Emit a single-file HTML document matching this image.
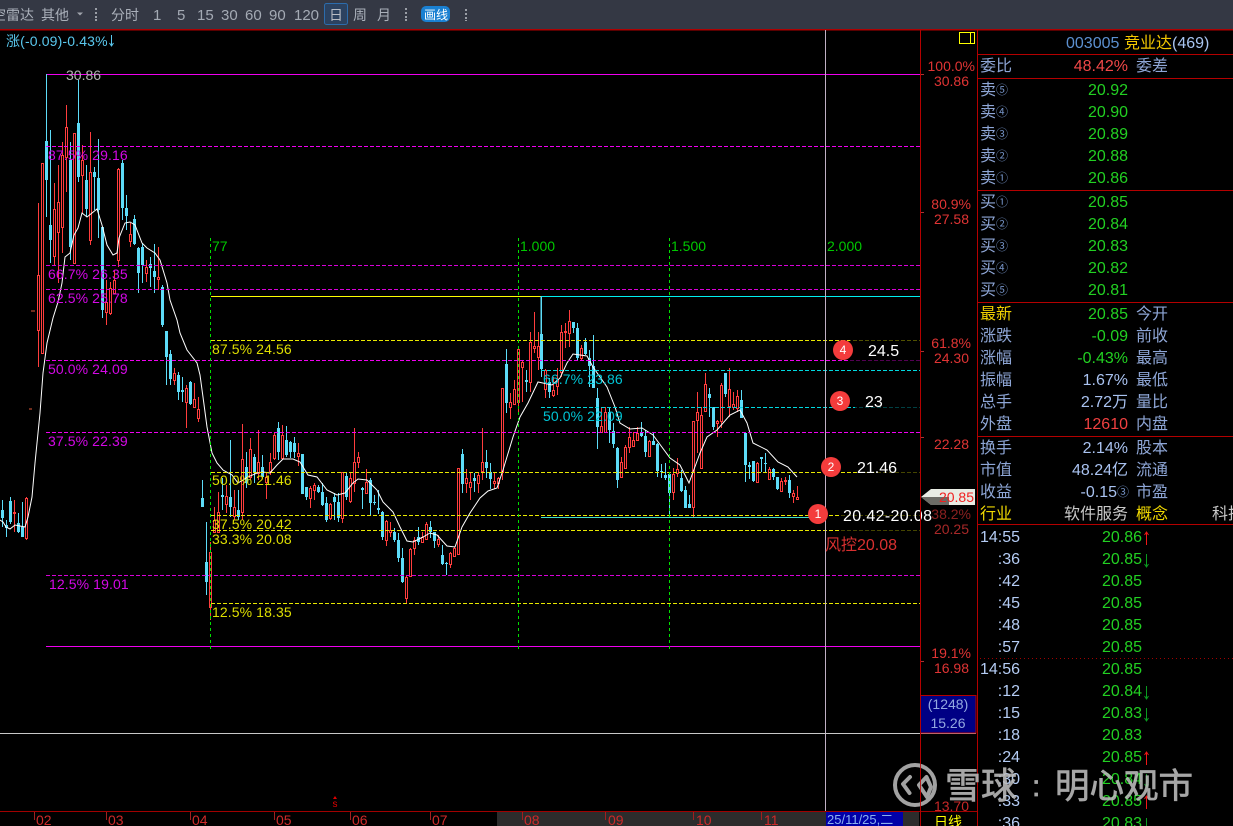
<!DOCTYPE html>
<html lang="zh"><head><meta charset="utf-8"><title>K线</title>
<style>
html,body{margin:0;padding:0;background:#000;width:1233px;height:826px;overflow:hidden}
svg{display:block;position:absolute;left:0;top:0}
text{font-family:"Liberation Sans","Noto Sans CJK SC",sans-serif;white-space:pre}
.tb{font-size:14px;fill:#aab0ba}
.tn{font-size:15px;fill:#a4aab4}
.ma{font-size:14px;fill:#d408e6;letter-spacing:.1px}
.ye{font-size:14px;fill:#dede00;letter-spacing:.1px}
.cy{font-size:14px;fill:#00c4d4;letter-spacing:.1px}
.gr{font-size:14px;fill:#00c800}
.ax{font-size:14px;fill:#e03434}
.mo{font-size:14px;fill:#cc2a2a}
.lb{font-size:16px;fill:#8ea6d6}
.v{font-size:16px;fill:#22d022;text-anchor:end}
.w{font-size:16px;fill:#a9c2f0;text-anchor:end}
.c{font-size:12px;fill:#7391c4;font-family:"Noto Sans CJK SC",sans-serif}
.t{font-size:16px;fill:#b4ccf4;text-anchor:end}
.wl{font-size:16px;fill:#fff}
.cn{font-size:12px;fill:#fff;text-anchor:middle}
</style></head><body>
<svg width="1233" height="826" viewBox="0 0 1233 826" xmlns="http://www.w3.org/2000/svg">
<rect width="1233" height="826" fill="#000"/>
<!-- toolbar -->
<rect width="1233" height="29" fill="#343844"/>
<rect y="29" width="1233" height="1.5" fill="#b00000"/>
<text x="-8" y="20" class="tb">空雷达</text><text x="41" y="20" class="tb">其他</text>
<path d="M77 12.500h6l-3 3z" fill="#a0a4ac"/>
<path d="M96 8v2M96 12v2M96 16v2M96 19v2M466 9v2M466 13v2M466 17v2M466 20v1" stroke="#9a9ea6" stroke-width="2"/>
<path d="M406 8v2M406 12v2M406 16v2M406 19v2" stroke="#9a9ea6" stroke-width="2"/>
<text x="111" y="20" class="tb">分时</text>
<text x="153" y="20" class="tn">1</text><text x="177" y="20" class="tn">5</text>
<text x="197" y="20" class="tn">15</text><text x="221" y="20" class="tn">30</text><text x="245" y="20" class="tn">60</text><text x="269" y="20" class="tn">90</text><text x="294" y="20" class="tn">120</text>
<rect x="324.500" y="3.500" width="23" height="21" rx="2" fill="#2c4260" stroke="#2c6cac"/>
<text x="329" y="20" class="tb" style="fill:#b8bcc4">日</text>
<text x="353" y="20" class="tb">周</text><text x="377" y="20" class="tb">月</text>
<rect x="421" y="6" width="29" height="16" rx="5" fill="#1a80d2"/>
<text x="424" y="19" style="font-size:12px;fill:#fff">画线</text>

<!-- candles -->
<path stroke="#5ddcf8" fill="none" shape-rendering="crispEdges" d="M2.500 500V527M6.500 520V537M10.500 497V524M18.500 513V533M22.500 502V537M46.500 75V217M50.500 130V263M70.500 142V260M78.500 80V182M86.500 165V217M94.500 167V210M98.500 139V238M102.500 227V318M122.500 160V220M126.500 195V230M134.500 215V245M138.500 247V293M142.500 243V283M150.500 257V287M154.500 244V293M162.500 285V327M166.500 331V385M170.500 350V385M178.500 372V400M182.500 377V402M190.500 381V405M202.500 480V507M206.500 522V595M222.500 478V510M230.500 440V517M238.500 490V520M246.500 452V488M254.500 454V483M262.500 455V478M278.500 422V460M286.500 426V457M290.500 441V458M294.500 437V458M302.500 454V494M306.500 487V500M318.500 485V493M322.500 483V506M326.500 497V522M334.500 493V520M338.500 493V522M346.500 472V500M362.500 487V509M370.500 478V515M374.500 495V505M378.500 490V514M382.500 511V540M394.500 528V542M398.500 533V562M402.500 548V583M418.500 527V545M430.500 521V538M434.500 532V548M442.500 545V565M446.500 562V575M462.500 449V493M474.500 473V492M486.500 450V478M490.500 463V489M506.500 349V413M526.500 370V392M541.500 297V377M549.500 378V398M573.500 322V333M577.500 323V360M585.500 338V355M589.500 350V387M593.500 335V388M597.500 388V449M609.500 408V443M613.500 423V448M617.500 447V488M641.500 422V437M645.500 430V457M653.500 432V445M657.500 443V477M661.500 464V478M665.500 463V480M669.500 473V517M681.500 470V492M685.500 486V508M689.500 495V508M709.500 388V417M713.500 407V430M725.500 373V397M741.500 390V418M745.500 433V482M749.500 462V479M753.500 462V482M761.500 457V472M765.500 453V472M773.500 468V480M777.500 477V490M789.500 475V498"/>
<path fill="#5ddcf8" shape-rendering="crispEdges" d="M1 510h3V518h-3zM5 525h3V528h-3zM9 501h3V522h-3zM17 523h3V532h-3zM21 527h3V537h-3zM45 141h3V180h-3zM49 225h3V240h-3zM69 160h3V247h-3zM77 123h3V177h-3zM85 180h3V209h-3zM93 172h3V177h-3zM97 178h3V210h-3zM101 227h3V310h-3zM121 163h3V208h-3zM125 208h3V216h-3zM133 219h3V244h-3zM137 248h3V273h-3zM141 247h3V265h-3zM149 264h3V268h-3zM153 271h3V277h-3zM161 287h3V325h-3zM165 331h3V357h-3zM169 354h3V379h-3zM177 375h3V392h-3zM181 390h3V392h-3zM189 382h3V404h-3zM201 498h3V507h-3zM205 562h3V582h-3zM221 495h3V497h-3zM229 497h3V507h-3zM237 510h3V517h-3zM245 467h3V483h-3zM253 457h3V473h-3zM261 467h3V477h-3zM277 428h3V452h-3zM285 440h3V455h-3zM289 442h3V452h-3zM293 443h3V452h-3zM301 454h3V494h-3zM305 487h3V497h-3zM317 487h3V492h-3zM321 492h3V505h-3zM325 503h3V520h-3zM333 497h3V502h-3zM337 502h3V518h-3zM345 476h3V497h-3zM361 488h3V490h-3zM369 480h3V503h-3zM373 502h3V503h-3zM377 508h3V510h-3zM381 512h3V537h-3zM393 532h3V540h-3zM397 540h3V558h-3zM401 558h3V582h-3zM417 537h3V542h-3zM429 527h3V532h-3zM433 532h3V541h-3zM441 555h3V564h-3zM445 563h3V564h-3zM461 454h3V484h-3zM473 478h3V481h-3zM485 462h3V468h-3zM489 472h3V479h-3zM505 364h3V403h-3zM525 380h3V382h-3zM540 334h3V369h-3zM548 382h3V392h-3zM572 322h3V328h-3zM576 328h3V358h-3zM584 342h3V354h-3zM588 358h3V366h-3zM592 366h3V388h-3zM596 398h3V427h-3zM608 412h3V430h-3zM612 431h3V444h-3zM616 448h3V480h-3zM640 433h3V436h-3zM644 436h3V452h-3zM652 441h3V445h-3zM656 444h3V471h-3zM660 471h3V472h-3zM664 475h3V478h-3zM668 474h3V493h-3zM680 478h3V491h-3zM684 490h3V508h-3zM688 504h3V508h-3zM708 394h3V398h-3zM712 407h3V427h-3zM724 373h3V394h-3zM740 400h3V418h-3zM744 433h3V465h-3zM748 465h3V467h-3zM752 461h3V481h-3zM760 457h3V459h-3zM764 463h3V464h-3zM772 469h3V477h-3zM776 477h3V489h-3zM788 480h3V493h-3z"/>
<path stroke="#ff3d3d" fill="none" shape-rendering="crispEdges" d="M14.500 500V532M26.500 497V540M38.500 203V367M42.500 163V353M54.500 183V265M58.500 165V283M62.500 142V253M66.500 105V192M74.500 133V263M82.500 145V213M90.500 132V245M106.500 280V325M110.500 282V315M114.500 270V293M118.500 168V267M130.500 223V247M146.500 260V282M158.500 247V290M174.500 368V385M186.500 385V428M194.500 383V408M198.500 397V422M210.500 542V620M214.500 507V533M218.500 492V532M226.500 485V513M234.500 490V520M242.500 424V520M250.500 438V480M258.500 430V480M266.500 472V499M270.500 453V475M274.500 432V460M282.500 425V458M298.500 443V466M310.500 486V508M314.500 483V500M330.500 503V520M342.500 472V523M350.500 473V503M354.500 428V492M358.500 452V468M366.500 469V493M386.500 520V546M390.500 522V537M406.500 575V603M410.500 548V577M414.500 537V555M422.500 532V543M426.500 522V540M438.500 535V547M450.500 552V568M454.500 547V557M458.500 468V555M466.500 469V493M470.500 472V500M478.500 472V493M482.500 428V480M494.500 473V489M498.500 477V489M502.500 388V480M510.500 393V419M514.500 380V404M518.500 349V412M522.500 360V402M530.500 332V392M534.500 312V353M538.500 332V370M545.500 369V398M553.500 377V397M557.500 368V395M561.500 325V377M565.500 323V348M569.500 310V347M581.500 345V360M601.500 407V433M605.500 407V433M621.500 457V477M625.500 445V469M629.500 427V453M633.500 432V447M637.500 427V440M649.500 440V457M673.500 468V500M677.500 458V477M693.500 421V517M697.500 392V453M701.500 407V468M705.500 373V412M717.500 420V437M721.500 383V428M729.500 368V417M733.500 392V410M737.500 390V412M757.500 462V483M769.500 467V480M781.500 478V492M785.500 477V485M793.500 490V503M797.500 486V500"/>
<path fill="#000" stroke="#ff3d3d" shape-rendering="crispEdges" d="M13.500 512.500h2V513.500h-2zM25.500 498.500h2V538.500h-2zM37.500 275.500h2V330.500h-2zM41.500 163.500h2V353.500h-2zM53.500 209.500h2V256.500h-2zM57.500 202.500h2V232.500h-2zM61.500 155.500h2V227.500h-2zM65.500 127.500h2V157.500h-2zM73.500 133.500h2V263.500h-2zM81.500 160.500h2V175.500h-2zM89.500 172.500h2V240.500h-2zM105.500 302.500h2V312.500h-2zM109.500 288.500h2V313.500h-2zM113.500 280.500h2V293.500h-2zM117.500 169.500h2V260.500h-2zM129.500 234.500h2V241.500h-2zM145.500 267.500h2V273.500h-2zM157.500 277.500h2V279.500h-2zM173.500 373.500h2V380.500h-2zM185.500 388.500h2V402.500h-2zM193.500 399.500h2V407.500h-2zM197.500 409.500h2V418.500h-2zM209.500 552.500h2V607.500h-2zM213.500 520.500h2V532.500h-2zM217.500 512.500h2V532.500h-2zM225.500 496.500h2V504.500h-2zM233.500 507.500h2V516.500h-2zM241.500 459.500h2V512.500h-2zM249.500 449.500h2V477.500h-2zM257.500 462.500h2V473.500h-2zM265.500 477.500h2V482.500h-2zM269.500 462.500h2V471.500h-2zM273.500 435.500h2V458.500h-2zM281.500 435.500h2V458.500h-2zM297.500 453.500h2V456.500h-2zM309.500 488.500h2V498.500h-2zM313.500 485.500h2V490.500h-2zM329.500 504.500h2V518.500h-2zM341.500 472.500h2V518.500h-2zM349.500 478.500h2V501.500h-2zM353.500 462.500h2V483.500h-2zM357.500 457.500h2V462.500h-2zM365.500 482.500h2V493.500h-2zM385.500 521.500h2V540.500h-2zM389.500 530.500h2V532.500h-2zM405.500 577.500h2V598.500h-2zM409.500 549.500h2V576.500h-2zM413.500 540.500h2V548.500h-2zM421.500 537.500h2V542.500h-2zM425.500 524.500h2V539.500h-2zM437.500 539.500h2V544.500h-2zM449.500 553.500h2V564.500h-2zM453.500 548.500h2V556.500h-2zM457.500 468.500h2V554.500h-2zM465.500 478.500h2V483.500h-2zM469.500 482.500h2V487.500h-2zM477.500 475.500h2V483.500h-2zM481.500 462.500h2V471.500h-2zM493.500 481.500h2V483.500h-2zM497.500 478.500h2V483.500h-2zM501.500 388.500h2V472.500h-2zM509.500 402.500h2V407.500h-2zM513.500 389.500h2V404.500h-2zM517.500 349.500h2V402.500h-2zM521.500 362.500h2V367.500h-2zM529.500 342.500h2V382.500h-2zM533.500 346.500h2V348.500h-2zM537.500 346.500h2V357.500h-2zM544.500 370.500h2V389.500h-2zM552.500 390.500h2V395.500h-2zM556.500 380.500h2V386.500h-2zM560.500 332.500h2V372.500h-2zM564.500 331.500h2V332.500h-2zM568.500 321.500h2V333.500h-2zM580.500 348.500h2V358.500h-2zM600.500 426.500h2V432.500h-2zM604.500 412.500h2V432.500h-2zM620.500 462.500h2V477.500h-2zM624.500 447.500h2V468.500h-2zM628.500 437.500h2V447.500h-2zM632.500 440.500h2V446.500h-2zM636.500 433.500h2V440.500h-2zM648.500 441.500h2V456.500h-2zM672.500 474.500h2V492.500h-2zM676.500 469.500h2V473.500h-2zM692.500 421.500h2V507.500h-2zM696.500 412.500h2V420.500h-2zM700.500 415.500h2V468.500h-2zM704.500 384.500h2V411.500h-2zM716.500 421.500h2V423.500h-2zM720.500 385.500h2V421.500h-2zM728.500 389.500h2V406.500h-2zM732.500 404.500h2V407.500h-2zM736.500 396.500h2V408.500h-2zM756.500 463.500h2V482.500h-2zM768.500 469.500h2V479.500h-2zM780.500 481.500h2V491.500h-2zM784.500 480.500h2V481.500h-2zM792.500 493.500h2V496.500h-2zM796.500 497.500h2V499.500h-2z"/>
<path d="M31 311h4M29 409h3" stroke="#e05a3a" shape-rendering="crispEdges"/>

<!-- MA -->
<polyline fill="none" stroke="#fff" stroke-width="1" points="0,520 3,522 6,527 10,529 15,525 20,526 25,527 28,517 32,497 35,463 40,413 43,373 47,343 53,318 58,302 62,283 65,257 70,253 74,235 78,228 82,213 87,217 92,213 97,209 102,225 107,245 113,255 117,253 119,238 125,223 130,222 135,225 142,243 147,248 155,253 160,260 167,283 170,300 177,320 180,333 187,350 197,363 200,375 203,397 207,427 212,453 217,463 223,470 232,475 238,483 248,477 257,473 263,472 270,473 277,465 283,459 293,459 300,462 308,475 317,477 327,490 337,495 345,493 353,483 358,479 367,480 377,490 383,502 393,512 400,527 407,541 413,542 423,537 430,533 437,535 447,546 455,547 462,527 470,513 480,498 488,491 497,488 503,470 513,437 520,417 528,403 538,382 552,385 560,378 567,363 573,354 587,356 593,367 607,387 615,407 620,423 630,429 642,428 653,435 670,458 680,465 689,483 700,453 707,437 717,430 730,415 740,410 747,423 753,443 767,450 778,462 788,467 797,477"/>

<!-- drawing lines -->
<g fill="none" shape-rendering="crispEdges">
<path d="M46 74.500H920M46 646.500H920" stroke="#f000f0" stroke-width="1.300"/>
<path d="M46.500 74V141" stroke="#5ddcf8"/>
<path d="M46 146.500H920M46 360.500H920M46 432.500H920" stroke="#f000f0" stroke-dasharray="4 2" stroke-width="1.200"/>
<path d="M46 265.500H920M46 289.500H920M46 575.500H920" stroke="#d800d8" stroke-dasharray="4 2"/>
<path d="M211 296.500H541" stroke="#ffff00" stroke-width="1.200"/>
<path d="M541 296.500H920" stroke="#00f0f0" stroke-width="1.200"/>
<path d="M541 296V335" stroke="#5ddcf8"/>
<path d="M211 340.500H920M211 472.500H920M211 515.500H920M211 530.500H920M211 603.500H920" stroke="#e8e800" stroke-dasharray="4 2"/>
<path d="M541 370.500H920M541 407.500H920" stroke="#00d8e0" stroke-dasharray="4 2"/>
<path d="M541 517.500H820" stroke="#40e0d0"/>
<path d="M210.500 238V652M518.500 238V652M669.500 238V652" stroke="#00e000" stroke-dasharray="3 3"/>
<path d="M825.500 30V812" stroke="#c0b0c4"/>
<path d="M0 733.500H976" stroke="#c8c8c8"/>
</g>
<!-- dim behind labels -->
<rect x="850" y="337" width="70" height="26" fill="#000" opacity=".65"/>
<rect x="855" y="402" width="65" height="10" fill="#000" opacity=".7"/>
<rect x="860" y="468" width="60" height="8" fill="#000" opacity=".7"/>
<rect x="840" y="512" width="80" height="20" fill="#000" opacity=".7"/>

<!-- chart labels -->
<text x="66" y="80" style="font-size:14px;fill:#b4b4b4">30.86</text>
<text x="6" y="46" style="font-size:14px;fill:#5ac8ee;letter-spacing:.15px">涨(-0.09)-0.43%</text>
<path d="M111.500 35V46M109.500 43l2 3l2-3" stroke="#5ac8ee" fill="none"/>
<text x="48" y="160" class="ma">87.5% 29.16</text>
<text x="48" y="279" class="ma">66.7% 26.35</text>
<text x="48" y="303" class="ma">62.5% 25.78</text>
<text x="48" y="374" class="ma">50.0% 24.09</text>
<text x="48" y="446" class="ma">37.5% 22.39</text>
<text x="49" y="589" class="ma">12.5% 19.01</text>
<text x="212" y="354" class="ye">87.5% 24.56</text>
<text x="212" y="485" class="ye">50.0% 21.46</text>
<text x="212" y="529" class="ye">37.5% 20.42</text>
<text x="212" y="544" class="ye">33.3% 20.08</text>
<text x="212" y="617" class="ye">12.5% 18.35</text>
<text x="543" y="384" class="cy">66.7% 23.86</text>
<text x="543" y="421" class="cy">50.0% 22.09</text>
<text x="212" y="251" class="gr">77</text>
<text x="520" y="251" class="gr">1.000</text>
<text x="671" y="251" class="gr">1.500</text>
<text x="827" y="251" class="gr">2.000</text>

<!-- circles -->
<circle cx="843" cy="350" r="10" fill="#f43c3c"/><text x="843" y="354" class="cn">4</text>
<circle cx="840" cy="401" r="10" fill="#f43c3c"/><text x="840" y="405" class="cn">3</text>
<circle cx="831" cy="467" r="10" fill="#f43c3c"/><text x="831" y="471" class="cn">2</text>
<circle cx="818" cy="514" r="10" fill="#f43c3c"/><text x="818" y="518" class="cn">1</text>
<text x="868" y="356" class="wl">24.5</text>
<text x="865" y="407" class="wl">23</text>
<text x="857" y="473" class="wl">21.46</text>
<text x="843" y="521" class="wl" textLength="89">20.42-20.08</text>
<text x="825" y="550" style="font-size:16px;fill:#d83030">风控20.08</text>

<!-- axis area -->
<path d="M920.500 30V826M977.500 54V826M977.500 30V54" stroke="#b40000" shape-rendering="crispEdges"/>
<path d="M921 74.500h3M921 212.500h3M921 351.500h3M921 437.500h3M921 661.500h3" stroke="#b03030" shape-rendering="crispEdges"/>
<text x="975" y="71" class="ax" text-anchor="end">100.0%</text>
<text x="969" y="86" class="ax" text-anchor="end">30.86</text>
<text x="971" y="209" class="ax" text-anchor="end">80.9%</text>
<text x="969" y="224" class="ax" text-anchor="end">27.58</text>
<text x="971" y="348" class="ax" text-anchor="end">61.8%</text>
<text x="969" y="363" class="ax" text-anchor="end">24.30</text>
<text x="969" y="449" class="ax" text-anchor="end">22.28</text>
<text x="971" y="519" class="ax" text-anchor="end" style="fill:#8a2020">38.2%</text>
<text x="969" y="534" class="ax" text-anchor="end" style="fill:#a82828">20.25</text>
<text x="971" y="658" class="ax" text-anchor="end">19.1%</text>
<text x="969" y="673" class="ax" text-anchor="end">16.98</text>
<text x="969" y="811" class="ax" text-anchor="end" style="fill:#c82828">13.70</text>
<rect x="959.500" y="32.500" width="15" height="11" fill="none" stroke="#ffff00"/>
<path d="M970.500 33v10" stroke="#ffff00"/>
<!-- price flag -->
<path d="M921 497l10-8h44v16h-44z" fill="#e8ece4"/>
<path d="M921 497h28v8h-18z" fill="#6c6c66"/>
<text x="974" y="502" style="font-size:14px;fill:#f02020" text-anchor="end">20.85</text>
<rect x="920.500" y="695.500" width="55.500" height="37.500" fill="#000084" stroke="#b40000"/>
<text x="948" y="709" style="font-size:14px;fill:#93a8e0" text-anchor="middle">(1248)</text>
<text x="948" y="728" style="font-size:14px;fill:#93a8e0" text-anchor="middle">15.26</text>

<!-- bottom axis -->
<rect x="497" y="812" width="422" height="14" fill="#2c2c2c"/>
<path d="M0 811.500H977" stroke="#a00000" shape-rendering="crispEdges"/>
<rect x="826" y="812" width="77" height="14" fill="#0000a8"/>
<text x="827" y="824" style="font-size:13px;fill:#8ab0f0">25/11/25,二</text>
<path d="M34.500 812V820M106.500 812V820M190.500 812V820M274.500 812V820M350.500 812V820M430.500 812V820M522.500 812V820M605.500 812V820M693.500 812V820M761.500 812V820" stroke="#a02020" shape-rendering="crispEdges"/>
<text x="36" y="825" class="mo">02</text><text x="108" y="825" class="mo">03</text><text x="192" y="825" class="mo">04</text><text x="276" y="825" class="mo">05</text><text x="352" y="825" class="mo">06</text><text x="432" y="825" class="mo">07</text><text x="524" y="825" class="mo">08</text><text x="608" y="825" class="mo">09</text><text x="696" y="825" class="mo">10</text><text x="764" y="825" class="mo">11</text>
<path d="M333 799h4l-2-3z" fill="#e00000"/>
<text x="335" y="807" style="font-size:10px;fill:#e00000" text-anchor="middle">s</text>
<text x="934" y="827" style="font-size:14px;fill:#ffff00">日线</text>

<!-- right panel -->
<path d="M978 54.500H1233M978 78.500H1233M978 190.500H1233M978 302.500H1233M978 436.500H1233M978 524.500H1233" stroke="#b40000" shape-rendering="crispEdges"/>
<text x="1066" y="48" style="font-size:16px;fill:#5c90d0">003005</text>
<text x="1124" y="48" style="font-size:16px;fill:#f4c800">竞业达</text>
<text x="1172" y="48" style="font-size:16px;fill:#a8c4f0">(469)</text>
<text x="980" y="71" class="lb">委比</text><text x="1128" y="71" class="w" style="fill:#f04848">48.42%</text><text x="1136" y="71" class="lb">委差</text>

<text x="980" y="95" class="lb">卖</text><text x="996" y="94" class="c">⑤</text><text x="1128" y="95" class="v">20.92</text>
<text x="980" y="117" class="lb">卖</text><text x="996" y="116" class="c">④</text><text x="1128" y="117" class="v">20.90</text>
<text x="980" y="139" class="lb">卖</text><text x="996" y="138" class="c">③</text><text x="1128" y="139" class="v">20.89</text>
<text x="980" y="161" class="lb">卖</text><text x="996" y="160" class="c">②</text><text x="1128" y="161" class="v">20.88</text>
<text x="980" y="183" class="lb">卖</text><text x="996" y="182" class="c">①</text><text x="1128" y="183" class="v">20.86</text>
<text x="980" y="207" class="lb">买</text><text x="996" y="206" class="c">①</text><text x="1128" y="207" class="v">20.85</text>
<text x="980" y="229" class="lb">买</text><text x="996" y="228" class="c">②</text><text x="1128" y="229" class="v">20.84</text>
<text x="980" y="251" class="lb">买</text><text x="996" y="250" class="c">③</text><text x="1128" y="251" class="v">20.83</text>
<text x="980" y="273" class="lb">买</text><text x="996" y="272" class="c">④</text><text x="1128" y="273" class="v">20.82</text>
<text x="980" y="295" class="lb">买</text><text x="996" y="294" class="c">⑤</text><text x="1128" y="295" class="v">20.81</text>

<text x="980" y="319" class="lb" style="fill:#f0d000">最新</text><text x="1128" y="319" class="v">20.85</text><text x="1136" y="319" class="lb">今开</text>
<text x="980" y="341" class="lb">涨跌</text><text x="1128" y="341" class="v">-0.09</text><text x="1136" y="341" class="lb">前收</text>
<text x="980" y="363" class="lb">涨幅</text><text x="1128" y="363" class="v">-0.43%</text><text x="1136" y="363" class="lb">最高</text>
<text x="980" y="385" class="lb">振幅</text><text x="1128" y="385" class="w">1.67%</text><text x="1136" y="385" class="lb">最低</text>
<text x="980" y="407" class="lb">总手</text><text x="1128" y="407" class="w">2.72万</text><text x="1136" y="407" class="lb">量比</text>
<text x="980" y="429" class="lb">外盘</text><text x="1128" y="429" class="w" style="fill:#f04040">12610</text><text x="1136" y="429" class="lb">内盘</text>
<text x="980" y="453" class="lb">换手</text><text x="1128" y="453" class="w">2.14%</text><text x="1136" y="453" class="lb">股本</text>
<text x="980" y="475" class="lb">市值</text><text x="1128" y="475" class="w">48.24亿</text><text x="1136" y="475" class="lb">流通</text>
<text x="980" y="497" class="lb">收益</text><text x="1117" y="497" class="w">-0.15</text><text x="1117" y="496" class="c">③</text><text x="1136" y="497" class="lb">市盈</text>
<text x="980" y="519" class="lb" style="fill:#f0d800">行业</text><text x="1128" y="519" class="w" style="fill:#c8c8c8">软件服务</text><text x="1136" y="519" class="lb" style="fill:#f0d800">概念</text><text x="1212" y="519" class="lb" style="fill:#c8c8c8">科技</text>

<path d="M980 658.500H1233" stroke="#a00000" stroke-dasharray="1 3" shape-rendering="crispEdges"/>
<text x="1020" y="542" class="t">14:55</text><text x="1142" y="542" class="v">20.86</text>
<text x="1020" y="564" class="t">:36</text><text x="1142" y="564" class="v">20.85</text>
<text x="1020" y="586" class="t">:42</text><text x="1142" y="586" class="v">20.85</text>
<text x="1020" y="608" class="t">:45</text><text x="1142" y="608" class="v">20.85</text>
<text x="1020" y="630" class="t">:48</text><text x="1142" y="630" class="v">20.85</text>
<text x="1020" y="652" class="t">:57</text><text x="1142" y="652" class="v">20.85</text>
<text x="1020" y="674" class="t">14:56</text><text x="1142" y="674" class="v">20.85</text>
<text x="1020" y="696" class="t">:12</text><text x="1142" y="696" class="v">20.84</text>
<text x="1020" y="718" class="t">:15</text><text x="1142" y="718" class="v">20.83</text>
<text x="1020" y="740" class="t">:18</text><text x="1142" y="740" class="v">20.83</text>
<text x="1020" y="762" class="t">:24</text><text x="1142" y="762" class="v">20.85</text>
<text x="1020" y="784" class="t">:30</text><text x="1142" y="784" class="v">20.84</text>
<text x="1020" y="806" class="t">:33</text><text x="1142" y="806" class="v">20.85</text>
<text x="1020" y="828" class="t">:36</text><text x="1142" y="828" class="v">20.83</text>
<!-- tick arrows -->
<path fill="none" stroke="#f01818" d="M1146.500 532V545M1144.500 535l2-3l2 3M1146.500 752V765M1144.500 755l2-3l2 3M1146.500 796V809M1144.500 799l2-3l2 3"/>
<path fill="none" stroke="#0a9a20" d="M1146.500 554V567M1144.500 564l2 3l2-3M1146.500 686V699M1144.500 696l2 3l2-3M1146.500 708V721M1144.500 718l2 3l2-3M1146.500 774V787M1144.500 784l2 3l2-3M1146.500 818V826"/>

<!-- watermark -->
<g fill="none" stroke="#b4b4b4" stroke-width="4" opacity=".9" stroke-linejoin="round" stroke-linecap="round">
<circle cx="915" cy="785" r="20"/>
<path d="M910 777L903 784L909.500 793"/>
<path d="M926.500 777L919 785L927 797L931 787Z"/>
</g>
<path d="M920.500 760V812" stroke="#b40000" opacity=".8" shape-rendering="crispEdges"/>
<g style="fill:#bdbdbd;opacity:.88;stroke:#bdbdbd;stroke-width:.7">
<text x="945" y="798" style="font-size:36px">雪球</text>
<text x="1032" y="796" style="font-size:30px">:</text>
<text x="1055" y="798" style="font-size:34.500px">明心观市</text>
</g>
</svg>
</body></html>
